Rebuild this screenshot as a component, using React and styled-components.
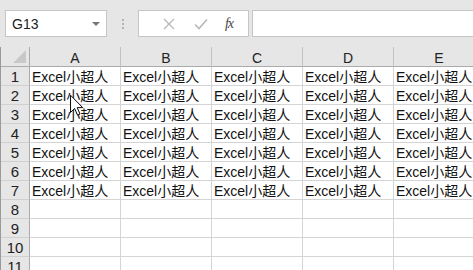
import React from "react";
import styled, { createGlobalStyle } from "styled-components";

const Global = createGlobalStyle`
  html, body { margin: 0; padding: 0; background: #fff; }
  body { width: 473px; height: 270px; overflow: hidden; font-family: "Liberation Sans", "Noto Sans CJK SC", sans-serif; }
`;

const Page = styled.div`
  position: relative;
  width: 473px;
  height: 270px;
  overflow: hidden;
`;

const Toolbar = styled.div`
  height: 47px;
  box-sizing: border-box;
  padding: 10px 0 0 5px;
  background: #e6e6e6;
  display: flex;
  align-items: flex-start;
`;

const NameBox = styled.div`
  width: 102px;
  height: 27px;
  box-sizing: border-box;
  background: #fff;
  border: 1px solid #c6c6c6;
  display: flex;
  align-items: center;
  justify-content: space-between;
  padding: 0 6px 0 6px;
  font-size: 14px;
  color: #222;
`;

const Caret = styled.span`
  width: 0;
  height: 0;
  border-left: 4px solid transparent;
  border-right: 4px solid transparent;
  border-top: 4px solid #777;
`;

const Dots = styled.div`
  width: 31px;
  height: 27px;
  display: flex;
  flex-direction: column;
  align-items: center;
  justify-content: center;
  gap: 2px;
  & > i {
    width: 2px;
    height: 2px;
    background: #b4b4b4;
    display: block;
  }
`;

const FxBox = styled.div`
  width: 111px;
  height: 27px;
  box-sizing: border-box;
  background: #fff;
  border: 1px solid #c6c6c6;
  display: flex;
  align-items: center;
  padding-left: 14px;
`;

const FxButton = styled.span`
  width: ${(p) => p.w}px;
  display: flex;
  align-items: center;
  justify-content: center;
`;

const FxText = styled.span`
  font-family: "Liberation Serif", "DejaVu Serif", serif;
  font-style: italic;
  font-size: 14px;
  color: #444;
  letter-spacing: -1px;
`;

const FormulaInput = styled.div`
  flex: 1;
  height: 27px;
  margin-left: 3px;
  box-sizing: border-box;
  background: #fff;
  border: 1px solid #c6c6c6;
  border-right: none;
`;

const Sheet = styled.div`
  display: grid;
  grid-template-columns: 29px repeat(5, 91px);
  grid-auto-rows: 19px;
  grid-template-rows: 20px;
  font-size: 14px;
  border-left: 1px solid #9a9a9a;
`;

const Corner = styled.div`
  position: relative;
  background: #e6e6e6;
  border-right: 1px solid #ababab;
  border-bottom: 1px solid #ababab;
  &::after {
    content: "";
    position: absolute;
    right: 3px;
    bottom: 3px;
    width: 0;
    height: 0;
    border-left: 13px solid transparent;
    border-bottom: 13px solid #c8c8c8;
  }
`;

const ColHead = styled.div`
  background: #e6e6e6;
  border-right: 1px solid #c2c2c2;
  border-bottom: 1px solid #ababab;
  display: flex;
  align-items: center;
  justify-content: center;
  color: #222;
  padding-top: 2px;
  box-sizing: border-box;
`;

const RowHead = styled.div`
  background: #e6e6e6;
  border-right: 1px solid #ababab;
  border-bottom: 1px solid #d0d0d0;
  display: flex;
  align-items: center;
  justify-content: center;
  color: #222;
  font-size: 15px;
  box-sizing: border-box;
  padding-top: 1px;
`;

const Cell = styled.div`
  border-right: 1px solid #d4d4d4;
  border-bottom: 1px solid #d4d4d4;
  display: flex;
  align-items: center;
  padding-left: 2px;
  padding-top: 1px;
  white-space: nowrap;
  overflow: hidden;
  color: #111;
  line-height: 18px;
  box-sizing: border-box;
`;

const Cursor = styled.svg`
  position: absolute;
  left: 70px;
  top: 94px;
`;

const cols = ["A", "B", "C", "D", "E"];
const rows = [1, 2, 3, 4, 5, 6, 7, 8, 9, 10, 11];

export default function App() {
  return (
    <Page>
      <Global />
      <Toolbar>
        <NameBox>
          <span>G13</span>
          <Caret />
        </NameBox>
        <Dots>
          <i />
          <i />
          <i />
        </Dots>
        <FxBox>
          <FxButton w={32}>
            <svg width="12" height="12" viewBox="0 0 12 12">
              <path d="M1 1 L11 11 M11 1 L1 11" stroke="#b9b9b9" strokeWidth="1.4" fill="none" />
            </svg>
          </FxButton>
          <FxButton w={32}>
            <svg width="14" height="12" viewBox="0 0 14 12">
              <path d="M1 6.5 L5 10.5 L13 1.5" stroke="#b9b9b9" strokeWidth="1.6" fill="none" />
            </svg>
          </FxButton>
          <FxButton w={24}>
            <FxText>fx</FxText>
          </FxButton>
        </FxBox>
        <FormulaInput />
      </Toolbar>
      <Sheet>
        <Corner />
        {cols.map((c) => (
          <ColHead key={c}>{c}</ColHead>
        ))}
        {rows.map((r) => (
          <React.Fragment key={r}>
            <RowHead>{r}</RowHead>
            {cols.map((c) => (
              <Cell key={c}>{r <= 7 ? "Excel小超人" : ""}</Cell>
            ))}
          </React.Fragment>
        ))}
      </Sheet>
      <Cursor width="14" height="24" viewBox="0 0 13 21">
        <path
          d="M0.5 0.5 L0.5 16.5 L4.3 12.8 L7 19 L9.3 18 L6.7 12 L11.8 12 Z"
          fill="#fff"
          stroke="#000"
          strokeWidth="0.9"
          strokeLinejoin="miter"
        />
      </Cursor>
    </Page>
  );
}
